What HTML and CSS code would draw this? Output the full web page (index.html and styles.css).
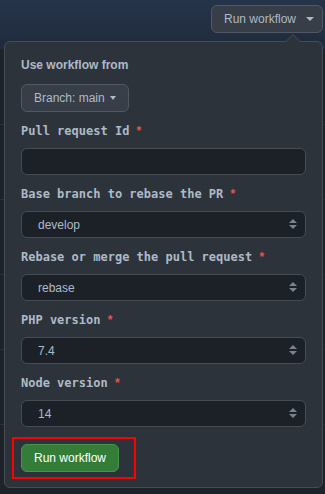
FILE: index.html
```html
<!DOCTYPE html>
<html lang="en">
<head>
    <meta charset="UTF-8">
    <meta name="viewport" content="width=device-width, initial-scale=1.0">
    <title>Run workflow</title>
    <link rel="stylesheet" href="styles.css">
</head>
<body>
    <div class="banner">
        <button class="btn btn-menu">Run workflow <span class="caret"></span></button>
    </div>
    <div class="run-row"></div>
    <div class="run-row"></div>
    <div class="run-row"></div>
    <div class="run-row"></div>
    <div class="run-row"></div>

    <div class="popover">
        <div class="title">Use workflow from</div>
        <button class="btn btn-branch">Branch: main <span class="caret small"></span></button>

        <div class="form-group">
            <label>Pull request Id <span class="req">*</span></label>
            <div class="field"></div>
        </div>
        <div class="form-group">
            <label>Base branch to rebase the PR <span class="req">*</span></label>
            <div class="field select">develop
                <svg width="8" height="11" viewBox="0 0 8 11"><path d="M4 0L8 4H0z M0 6H8L4 10z" fill="#768390"/></svg>
            </div>
        </div>
        <div class="form-group">
            <label>Rebase or merge the pull request <span class="req">*</span></label>
            <div class="field select">rebase
                <svg width="8" height="11" viewBox="0 0 8 11"><path d="M4 0L8 4H0z M0 6H8L4 10z" fill="#768390"/></svg>
            </div>
        </div>
        <div class="form-group">
            <label>PHP version <span class="req">*</span></label>
            <div class="field select">7.4
                <svg width="8" height="11" viewBox="0 0 8 11"><path d="M4 0L8 4H0z M0 6H8L4 10z" fill="#768390"/></svg>
            </div>
        </div>
        <div class="form-group">
            <label>Node version <span class="req">*</span></label>
            <div class="field select">14
                <svg width="8" height="11" viewBox="0 0 8 11"><path d="M4 0L8 4H0z M0 6H8L4 10z" fill="#768390"/></svg>
            </div>
        </div>

        <div class="submit-wrap">
            <button class="btn btn-run">Run workflow</button>
            <div class="highlight"></div>
        </div>
    </div>
</body>
</html>
```

FILE: styles.css
```css
body {
    margin: 0;
    padding: 0;
    background: #1e2329;
    font-family: "Liberation Sans", Arial, sans-serif;
    font-size: 12px;
    color: #adbac7;
    position: relative;
    height: 494px;
    overflow: hidden;
}
.banner {
    height: 50px;
    box-sizing: border-box;
    padding: 5px 2px 0 0;
    display: flex;
    justify-content: flex-end;
    align-items: flex-start;
    background: linear-gradient(#26344a, #1f2b3c);
}
.run-row {
    height: 75px;
    border-bottom: 1px solid #2b3139;
    box-sizing: border-box;
}
.btn {
    font-family: "Liberation Sans", Arial, sans-serif;
    font-size: 12px;
    color: #adbac7;
    background: #373e47;
    border: 1px solid #4f5863;
    border-radius: 6px;
    display: flex;
    align-items: center;
    cursor: pointer;
}
.btn-menu {
    height: 28px;
    width: 112px;
    padding: 0 0 0 12px;
}
.caret {
    display: inline-block;
    width: 0;
    height: 0;
    border-left: 4px solid transparent;
    border-right: 4px solid transparent;
    border-top: 4px solid #adbac7;
    margin-left: 10px;
}
.caret.small {
    border-left-width: 3.5px;
    border-right-width: 3.5px;
    margin-left: 5px;
}
.popover {
    position: absolute;
    left: 4px;
    top: 41px;
    width: 319px;
    box-sizing: border-box;
    background: #2d333b;
    border: 1px solid #444c56;
    border-radius: 6px;
    padding: 14px 16px 15px;
}
.popover::before {
    content: "";
    position: absolute;
    top: -8px;
    right: 21px;
    border-left: 8px solid transparent;
    border-right: 8px solid transparent;
    border-bottom: 8px solid #444c56;
}
.popover::after {
    content: "";
    position: absolute;
    top: -7px;
    right: 22px;
    border-left: 7px solid transparent;
    border-right: 7px solid transparent;
    border-bottom: 7px solid #2d333b;
}
.title {
    font-weight: bold;
    line-height: 18px;
    margin-bottom: 10px;
}
.btn-branch {
    height: 28px;
    width: 108px;
    padding: 0 0 0 12px;
    margin-bottom: 10px;
}
.form-group {
    margin-bottom: 10px;
}
.form-group label {
    display: block;
    font-family: "DejaVu Sans Mono", monospace;
    font-weight: bold;
    font-size: 12px;
    line-height: 18px;
    margin-bottom: 8px;
}
.req {
    color: #e5534b;
    font-family: "Liberation Sans", Arial, sans-serif;
}
.field {
    height: 27px;
    box-sizing: border-box;
    background: #1c2128;
    border: 1px solid #444c56;
    border-radius: 6px;
}
.select {
    display: flex;
    align-items: center;
    justify-content: space-between;
    padding: 0 8px 0 16px;
    font-size: 12px;
}
.submit-wrap {
    position: relative;
    margin-top: 17px;
    width: fit-content;
}
.btn-run {
    height: 28px;
    width: 98px;
    justify-content: center;
    background: #347d39;
    border-color: #46954a;
    color: #ffffff;
    padding: 0;
}
.highlight {
    position: absolute;
    left: -9px;
    top: -7px;
    width: 124px;
    height: 42px;
    box-sizing: border-box;
    border: 2px solid #ff0000;
}
```
